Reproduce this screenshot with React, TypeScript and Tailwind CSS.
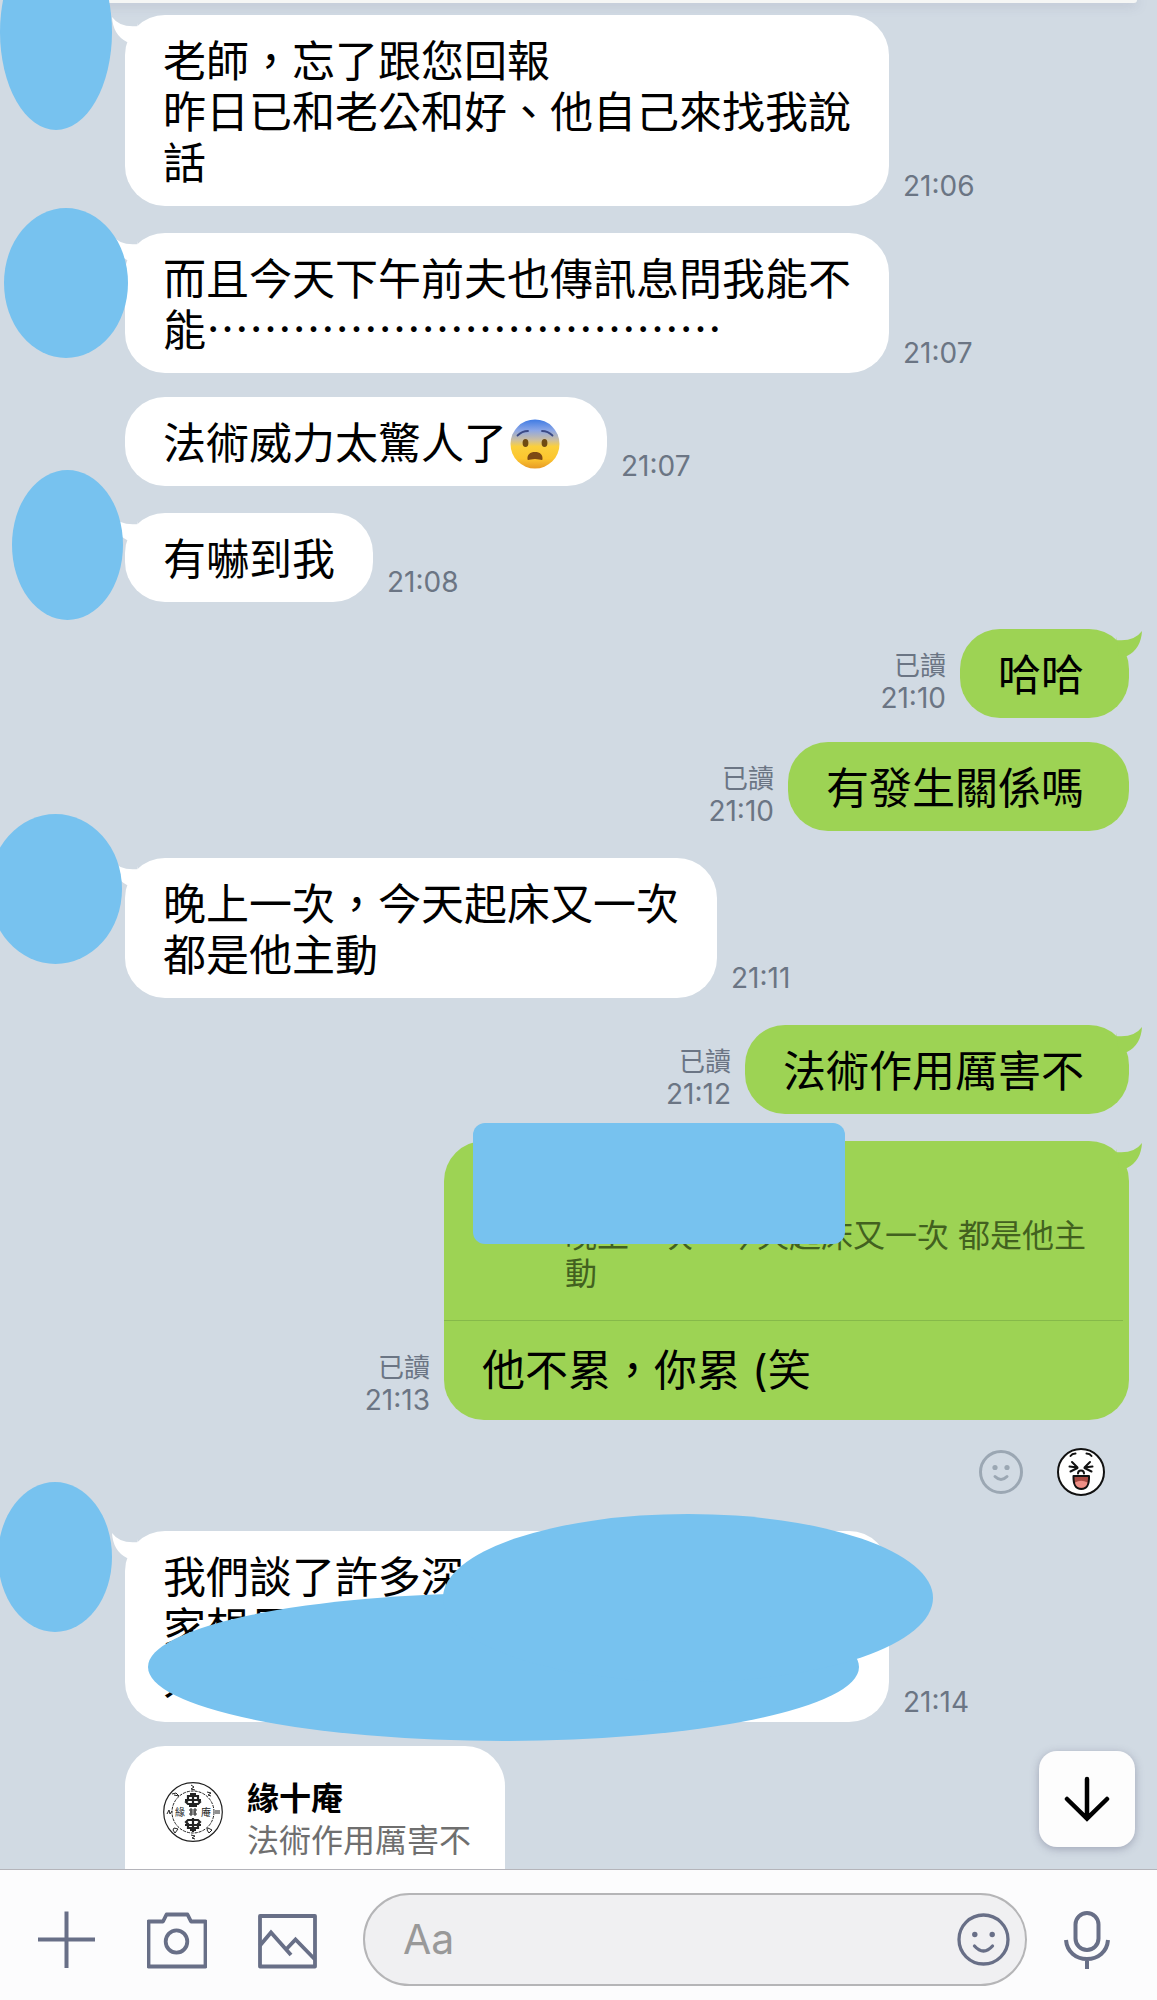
import type { ReactNode } from "react";
import clsx from "clsx";

type Message = {
  id: number;
  from: "them" | "me";
  time: string;
  tail?: boolean;
  body: ReactNode;
  avatar?: string;
};

function FearfulEmoji() {
  return (
    <svg viewBox="0 0 50 50" className="-my-2 ml-[3px] mr-[9px] inline-block h-[50px] w-[50px] align-[-2px]" role="img" aria-label="😨">
      <defs>
        <linearGradient id="fear" x1="0" y1="0" x2="0" y2="1">
          <stop offset="0" stopColor="#3f7be4" />
          <stop offset="0.22" stopColor="#8ba6e6" />
          <stop offset="0.42" stopColor="#cdbf9f" />
          <stop offset="0.55" stopColor="#fbd03c" />
          <stop offset="0.8" stopColor="#fcc62f" />
          <stop offset="1" stopColor="#e79a26" />
        </linearGradient>
      </defs>
      <circle cx="25" cy="25" r="24.5" fill="url(#fear)" />
      <path d="M7.5 16.5Q12 12 18 12" fill="none" stroke="#3b4a86" strokeWidth="1.8" strokeLinecap="round" />
      <path d="M42.5 16.5Q38 12 32 12" fill="none" stroke="#3b4a86" strokeWidth="1.8" strokeLinecap="round" />
      <ellipse cx="15.5" cy="24" rx="2.9" ry="3.9" fill="#6f4b12" />
      <ellipse cx="34.5" cy="24" rx="2.9" ry="3.9" fill="#6f4b12" />
      <path d="M17.5 40.5C17 35.5 20 33 25 33S33 35.5 32.5 40.5C32.3 41.8 29 40 25 40S17.7 41.8 17.5 40.5Z" fill="#7d4a14" />
    </svg>
  );
}

const messages: Message[] = [
  {
    id: 1,
    from: "them",
    time: "21:06",
    tail: true,
    avatar: "left-0 -top-[81px] h-[196px] w-[112px]",
    body: (
      <>
        老師，忘了跟您回報
        <br />
        昨日已和老公和好、他自己來找我說話
      </>
    ),
  },
  {
    id: 2,
    from: "them",
    time: "21:07",
    tail: true,
    avatar: "left-1 -top-[25px] h-[150px] w-[124px]",
    body: (
      <>
        而且今天下午前夫也傳訊息問我能不能
        <span className="font-['Noto_Sans_CJK_TC',sans-serif] leading-none">………………………………</span>
      </>
    ),
  },
  {
    id: 3,
    from: "them",
    time: "21:07",
    body: (
      <>
        法術威力太驚人了
        <FearfulEmoji />
      </>
    ),
  },
  {
    id: 4,
    from: "them",
    time: "21:08",
    tail: true,
    avatar: "left-3 -top-[43px] h-[150px] w-[111px]",
    body: "有嚇到我",
  },
  { id: 5, from: "me", time: "21:10", tail: true, body: "哈哈" },
  { id: 6, from: "me", time: "21:10", body: "有發生關係嗎" },
  {
    id: 7,
    from: "them",
    time: "21:11",
    tail: true,
    avatar: "-left-[11px] -top-[44px] h-[150px] w-[133px]",
    body: (
      <>
        晚上一次，今天起床又一次
        <br />
        都是他主動
      </>
    ),
  },
  { id: 8, from: "me", time: "21:12", tail: true, body: "法術作用厲害不" },
];

function Tail({ side }: { side: "left" | "right" }) {
  return (
    <svg
      viewBox="0 0 30 30"
      aria-hidden="true"
      className={clsx(
        "absolute top-0 h-[30px] w-[30px]",
        side === "left" ? "-left-[14px] -scale-x-100 fill-white" : "-right-[14px] fill-[#9dd354]"
      )}
    >
      <path d="M3 8V11Q21 13 29 2Q28 20 14 27L6 27Z" />
    </svg>
  );
}

function Stamp({ time, read }: { time: string; read?: boolean }) {
  return (
    <div className={clsx("mb-1 shrink-0 text-[26px] leading-[32px] text-[#6b7584]", read && "text-right")}>
      {read && <div>已讀</div>}
      <time className="block text-[28px] leading-[32px]">{time}</time>
    </div>
  );
}

function Row({ mine, tail, children }: { mine?: boolean; tail?: boolean; children: ReactNode }) {
  return (
    <li
      className={clsx(
        "relative flex items-end gap-[14px] pl-[125px] pr-7",
        mine && "justify-end",
        tail ? "mt-[27px] first:mt-0" : "mt-6"
      )}
    >
      {children}
    </li>
  );
}

function Avatar({ className }: { className: string }) {
  return <span className={clsx("absolute rounded-[50%] bg-[#77c2ef]", className)} />;
}

function Bubble({ mine, tail, children }: { mine?: boolean; tail?: boolean; children: ReactNode }) {
  return (
    <div
      className={clsx(
        "relative max-w-[764px] rounded-[40px] pb-[17px] pl-[38px] pt-[21px] text-[43px] leading-[51px] text-black",
        mine ? "bg-[#9dd354] pr-[45px]" : "bg-white pr-[38px]"
      )}
    >
      {tail && <Tail side={mine ? "right" : "left"} />}
      {children}
    </div>
  );
}

function QuoteMessage() {
  return (
    <Row mine tail>
      <Stamp time="21:13" read />
      <div className="relative w-full max-w-[685px] rounded-[40px] bg-[#9dd354]">
        <Tail side="right" />
        <blockquote className="pb-[27px] pl-[121px] pr-[38px] pt-[76px] text-[32px] leading-[38px] text-[#42611f]">
          晚上一次，今天起床又一次 都是他主動
        </blockquote>
        <div className="mr-[6px] h-px bg-[#86b94a]" />
        <p className="pb-6 pl-[38px] pt-6 text-[43px] leading-[51px]">他不累，你累 (笑</p>
        <span className="absolute -top-[18px] left-[29px] h-[121px] w-[372px] rounded-xl bg-[#77c2ef]" />
      </div>
    </Row>
  );
}

function Reactions() {
  return (
    <li className="mb-[35px] mt-7 flex items-center justify-end gap-[34px] pr-[52px]">
      <button type="button" aria-label="Add reaction" className="h-11 w-11">
        <svg viewBox="0 0 44 44" fill="none" stroke="#9ba7b3" strokeWidth="3">
          <circle cx="22" cy="22" r="20.5" />
          <circle cx="16" cy="17.5" r="2.6" fill="#9ba7b3" stroke="none" />
          <circle cx="28" cy="17.5" r="2.6" fill="#9ba7b3" stroke="none" />
          <path d="M16 26.5Q22 32.5 28 26.5" strokeLinecap="round" />
        </svg>
      </button>
      <button type="button" aria-label="Laughing" className="h-12 w-12">
        <svg viewBox="0 0 48 48" fill="none" stroke="#111" strokeWidth="2" strokeLinecap="round" strokeLinejoin="round">
          <circle cx="24" cy="24" r="23" fill="#fff" />
          <path d="M13.5 8Q15 5.8 18.5 5.6M29.5 5.6Q33 5.8 34.5 8" />
          <path d="M15 14L20.5 19.5L12.5 18.5M20.5 20L13.5 23.5M33 14L27.5 19.5L35.5 18.5M27.5 20L34.5 23.5" />
          <path d="M21 25.5Q21 22.5 24 22.5T27 25.5" />
          <path d="M16.5 28H32Q32.5 41 24.3 41T16.5 28Z" fill="#a84a42" />
          <path d="M18 34.5Q24 31 30.5 34.5Q29.5 39.8 24.3 39.8T18 34.5Z" fill="#ef8f86" stroke="none" />
        </svg>
      </button>
    </li>
  );
}

function SealLogo() {
  return (
    <svg viewBox="0 0 60 60" className="h-[60px] w-[60px] shrink-0" fill="none" stroke="#222" aria-hidden="true">
      <circle cx="30" cy="30" r="29.3" strokeWidth="1.2" />
      <circle cx="30" cy="30" r="21" strokeWidth="1" strokeDasharray="3 1" />
      <path
        strokeWidth="1"
        d="M28 3l3 2-3 2 4 1M44 10l4 1-3 2 3 1M52 29h5M52 31h5M45 46l4 2-3 3-2-3zM28 53l4 1-3 2 3 1M11 46l4 1-3 4-2-3zM4 32l2-4 1 4 2-3M9 12l4-1 3 3-5-1"
      />
      <g strokeWidth="2.2">
        <path d="M30 11v14M25 14h10v4l2 2-2 2H25l-2-2 2-2zM27 12h6M26 24h8M22 18h16" />
        <path d="M30 36v14M25 38h10l2 2-2 2v4H25v-4l-2-2zM27 48h6M22 43h16" />
      </g>
      <path d="M26 28h8M26 32h8M28 26v8M32 26v8M27 30h6" strokeWidth="1" />
      <text x="12" y="34" fontSize="10" fill="#222" stroke="none">緣</text>
      <text x="38" y="34" fontSize="10" fill="#222" stroke="none">庵</text>
    </svg>
  );
}

function Composer() {
  return (
    <form
      onSubmit={(e) => e.preventDefault()}
      className="flex shrink-0 items-center border-t border-[#b4b4ba] bg-[#fcfcfd] pb-[14px] pl-9 pr-10 pt-[23px] text-[#686f87]"
    >
      <div className="mr-[45px] flex gap-[51px]">
        <button type="button" aria-label="More" className="h-[60px] w-[60px]">
          <svg viewBox="0 0 60 60" fill="none" stroke="currentColor" strokeWidth="4">
            <path d="M30.5 1.5V58M2 29.5H59" />
          </svg>
        </button>
        <button type="button" aria-label="Camera" className="h-[60px] w-[60px]">
          <svg viewBox="0 0 60 60" fill="none" stroke="currentColor" strokeWidth="3.8" strokeLinejoin="round">
            <path d="M1.5 11.5H16L19.5 4.5H40.5L44 11.5H58.5V56.5H1.5Z" />
            <ellipse cx="29.5" cy="31.5" rx="10.8" ry="11.2" />
          </svg>
        </button>
        <button type="button" aria-label="Photos" className="h-[60px] w-[60px]">
          <svg viewBox="0 0 60 60" fill="none" stroke="currentColor" strokeWidth="3.8" strokeLinejoin="round">
            <path d="M2 6H57V56.5H2Z" />
            <path d="M2 35.5L13 22.5L33 45M28 39.5L37.5 29.5L57 49.5" strokeLinejoin="miter" />
          </svg>
        </button>
      </div>
      <div className="mr-[30px] flex h-[93px] min-w-0 flex-1 items-center rounded-full border-2 border-[#b5b5b7] bg-[#f0f0f2] pl-[38px] pr-[15px]">
        <input
          type="text"
          aria-label="Message"
          placeholder="Aa"
          className="h-14 min-w-0 flex-1 bg-transparent text-[41px] text-black outline-none placeholder:text-[#999999]"
        />
        <button type="button" aria-label="Stickers" className="h-[53px] w-[53px]">
          <svg viewBox="0 0 53 53" fill="none" stroke="currentColor" strokeWidth="3.3">
            <circle cx="26.5" cy="26.5" r="24.5" />
            <circle cx="17.8" cy="21.5" r="2.7" fill="currentColor" stroke="none" />
            <circle cx="35.2" cy="21.5" r="2.7" fill="currentColor" stroke="none" />
            <path d="M17.5 33Q26.5 43 35.5 33" strokeLinecap="round" />
          </svg>
        </button>
      </div>
      <button type="button" aria-label="Voice message" className="h-[60px] w-[60px]">
        <svg viewBox="0 0 60 60" fill="none" stroke="currentColor" strokeWidth="4">
          <rect x="18.5" y="3" width="23" height="37" rx="11.5" />
          <path d="M9 30C10 42 19 49 30 49S50 42 51 30M30 49V59" />
        </svg>
      </button>
    </form>
  );
}

export default function App() {
  return (
    <div className="flex h-screen flex-col font-[Inter,'Noto_Sans_CJK_TC',sans-serif]">
      <main className="relative min-h-0 flex-1 overflow-hidden bg-[#d1dae3]">
        <div className="mx-5 h-[3px] rounded-b-lg bg-[#f5f6f5] shadow-[0_1px_12px_rgba(90,90,130,0.4)]" />
        <ul className="pt-3">
          {messages.map((m) => {
            const mine = m.from === "me";
            return (
              <Row key={m.id} mine={mine} tail={m.tail}>
                {mine && <Stamp time={m.time} read />}
                <Bubble mine={mine} tail={m.tail}>
                  {m.body}
                </Bubble>
                {!mine && <Stamp time={m.time} />}
                {m.avatar && <Avatar className={m.avatar} />}
              </Row>
            );
          })}
          <QuoteMessage />
          <Reactions />
          <li className="relative flex items-end gap-[14px] pl-[125px] pr-7">
            <div className="relative w-full max-w-[764px] rounded-[40px] bg-white pb-[17px] pl-[38px] pr-[38px] pt-[21px] text-[43px] leading-[51px]">
              <Tail side="left" />
              我們談了許多深
              <br />
              家想見
              <br />
              人
              <span className="absolute left-[23px] top-[62px] h-[148px] w-[711px] rounded-[50%] bg-[#77c2ef]" />
              <span className="absolute -top-[17px] left-[318px] h-[168px] w-[490px] rounded-[50%] bg-[#77c2ef]" />
            </div>
            <Stamp time="21:14" />
            <Avatar className="-left-[2px] -top-[49px] h-[150px] w-[114px]" />
          </li>
          <Row>
            <div className="flex gap-6 rounded-[40px] bg-white pb-12 pl-[38px] pr-[34px] pt-8">
              <div className="pt-1">
                <SealLogo />
              </div>
              <div className="text-[32px] leading-[42px]">
                <p className="font-bold text-black">緣十庵</p>
                <p className="text-[#6f6f6f]">法術作用厲害不</p>
              </div>
            </div>
          </Row>
        </ul>
        <button
          type="button"
          aria-label="Scroll to latest"
          className="absolute bottom-[22px] right-[22px] flex h-24 w-24 items-center justify-center rounded-[18px] bg-[#fdfdfd] shadow-[0_2px_8px_rgba(70,70,100,0.35)]"
        >
          <svg viewBox="0 0 48 48" className="h-12 w-12" fill="none" stroke="#000" strokeWidth="4.5" strokeLinecap="round">
            <path d="M24 4V43M4 24L24 43.5L44 24" />
          </svg>
        </button>
      </main>
      <Composer />
    </div>
  );
}
